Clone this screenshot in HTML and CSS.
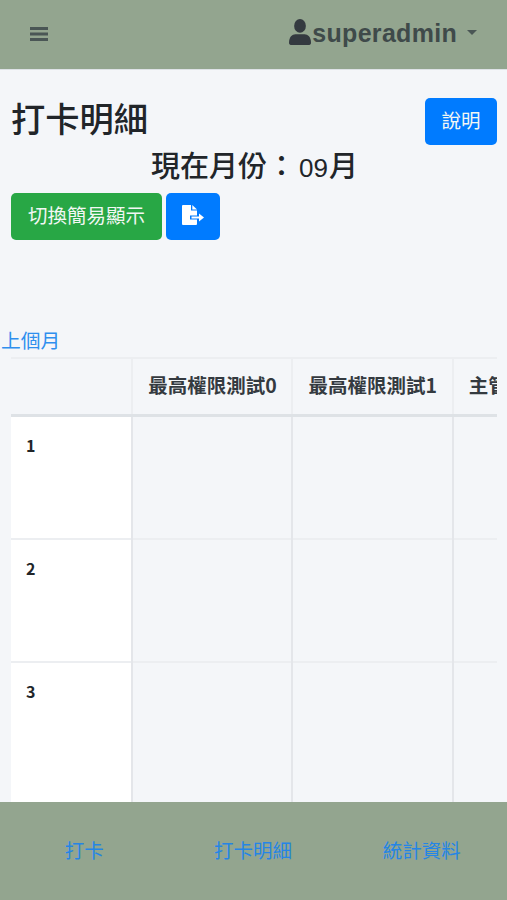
FILE: index.html
```html
<!DOCTYPE html>
<html lang="zh-Hant">
<head>
<meta charset="utf-8">
<title>打卡明細</title>
<link rel="stylesheet" href="styles.css">
</head>
<body>
<div class="page">
  <header class="topbar">
    <a class="burger" aria-label="menu">
      <svg viewBox="0 0 18 16" width="18" height="16"><path d="M0 1h18v3H0zM0 6.500h18v3H0zM0 12h18v3H0z"/></svg>
    </a>
    <a class="user">
      <svg class="user-icon" viewBox="0 0 24 24" width="22" height="26" preserveAspectRatio="none"><circle cx="12" cy="6.4" r="6.4"/><path d="M0 22c0-5.500 3.500-8 7-8h10c3.500 0 7 2.500 7 8 0 1.300-.8 2-2 2H2c-1.200 0-2-.7-2-2z"/></svg><span class="user-name">superadmin</span><span class="caret"></span>
    </a>
  </header>
  <main class="content">
    <div class="title-row">
      <h1 class="title">打卡明細</h1>
      <button class="btn btn-blue btn-help">說明</button>
    </div>
    <h2 class="month">現在月份：<span class="month-num">09</span>月</h2>
    <div class="actions">
      <button class="btn btn-green">切換簡易顯示</button>
      <button class="btn btn-blue btn-icon" aria-label="export">
        <svg viewBox="0 0 22 20" width="22" height="20"><path d="M0 1a1 1 0 0 1 1-1h8v5.500h6v5H8v4h7V19a1 1 0 0 1-1 1H1a1 1 0 0 1-1-1z"/><path d="M10.300 0L15 4.500h-4.700z"/><path d="M9.500 11.500H17V8.500l5 4-5 4v-3H9.500z"/></svg>
      </button>
    </div>
    <a class="prev">上個月</a>
    <div class="table-wrap">
      <table class="sheet">
        <thead>
          <tr><th class="first"></th><th>最高權限測試0</th><th>最高權限測試1</th><th>主管測試</th></tr>
        </thead>
        <tbody>
          <tr class="row-one"><th class="first">1</th><td></td><td></td><td></td></tr>
          <tr><th class="first">2</th><td></td><td></td><td></td></tr>
          <tr class="tall"><th class="first">3</th><td></td><td></td><td></td></tr>
        </tbody>
      </table>
    </div>
  </main>
  <footer class="tabs">
    <a class="tab">打卡</a>
    <a class="tab">打卡明細</a>
    <a class="tab">統計資料</a>
  </footer>
</div>
</body>
</html>
```
FILE: styles.css
```css
* { box-sizing: border-box; }
html, body { margin: 0; height: 100%; }
body {
  font-family: "Liberation Sans", "Noto Sans CJK TC", sans-serif;
  color: #212529;
  background: #f4f6f9;
  overflow: hidden;
}
.page { height: 900px; display: flex; flex-direction: column; }
.topbar {
  height: 70px;
  flex: none;
  background: #93a58f;
  border-bottom: 1px solid #dee2e6;
  display: flex;
  align-items: center;
  justify-content: space-between;
  padding: 0 30px 2px 30px;
  color: #343a40;
}
.burger { display: flex; }
.burger svg { fill: #4a5655; }
.user { display: flex; align-items: center; }
.user-icon { fill: #343a40; margin-top: -3px; margin-right: 1px; }
.user-name { font-size: 25px; font-weight: 700; color: #3f4a4a; letter-spacing: .3px; }
.caret {
  margin-left: 10px;
  border-top: 5px solid #4a5655;
  border-left: 5px solid transparent;
  border-right: 5px solid transparent;
  margin-top: -2px;
}
.content { flex: 1; min-height: 0; overflow: hidden; }
.title-row {
  display: flex;
  justify-content: space-between;
  align-items: flex-start;
  padding: 27px 10px 0 11px;
  height: 75px;
}
.title {
  margin: 0;
  font: 500 34.250px/41px "Noto Sans CJK TC", sans-serif;
}
.month {
  margin: 0;
  height: 48px;
  width: 507px;
  padding-left: 151px;
  font: 500 29px/38px "Noto Sans CJK TC", sans-serif;
}
.month-num {
  font: 400 26px/38px "Liberation Sans", sans-serif;
  margin: 0 1px 0 3px;
}
.btn {
  border: 1px solid transparent;
  border-radius: 5px;
  color: #f2f7f4;
  font: 400 19.500px/1 "Noto Sans CJK TC", sans-serif;
  padding: 0 0 3px;
  height: 47px;
}
.btn-blue { background: #007bff; }
.btn-green { background: #28a745; width: 151px; }
.btn-help { width: 72px; margin-top: 1px; }
.btn-icon { width: 54px; display: flex; align-items: center; justify-content: center; padding: 0 0 4px; }
.btn-icon svg { fill: #fff; }
.actions { display: flex; gap: 4px; padding-left: 11px; }
.prev {
  display: block;
  margin-top: 87px;
  height: 30px;
  padding-left: 1px;
  color: #2f8fee;
  font: 400 19.750px/26px "Noto Sans CJK TC", sans-serif;
}
.table-wrap { margin-left: 11px; width: 486px; overflow: hidden; }
.sheet {
  border-collapse: collapse;
  table-layout: fixed;
  width: 602px;
}
.sheet th, .sheet td {
  border-left: 2px solid #e4e6ea;
  border-top: 2px solid #eceef1;
  padding: 0;
  vertical-align: top;
}
.sheet thead th {
  height: 57px;
  border-bottom: 3px solid #dee2e6;
  border-left-color: #eceef1;
  vertical-align: middle;
  text-align: left;
  padding: 0 0 2px 15px;
  white-space: nowrap;
  font: 700 19.500px/24px "Noto Sans CJK TC", sans-serif;
  color: #343a40;
  width: 160px;
}
.sheet thead th.first { width: 121px; border-left: 0; }
.sheet tbody tr { height: 123px; }
.sheet tbody tr.row-one { height: 124px; }
.sheet tbody tr.tall { height: 140px; }
.sheet tbody td { background: #f4f6f9; }
.sheet tbody th.first {
  background: #fff;
  border-left: 0;
  text-align: left;
  padding: 16px 0 0 15px;
  font: 700 16px/24px "Noto Sans CJK TC", sans-serif;
}
.tabs {
  height: 98px;
  flex: none;
  background: #93a58f;
  display: grid;
  grid-template-columns: repeat(3, 1fr);
  align-items: center;
  text-align: center;
  padding: 0 1px 2px 0;
}
.tab {
  color: #2585e6;
  font: 400 19.500px/26px "Noto Sans CJK TC", sans-serif;
}
```
